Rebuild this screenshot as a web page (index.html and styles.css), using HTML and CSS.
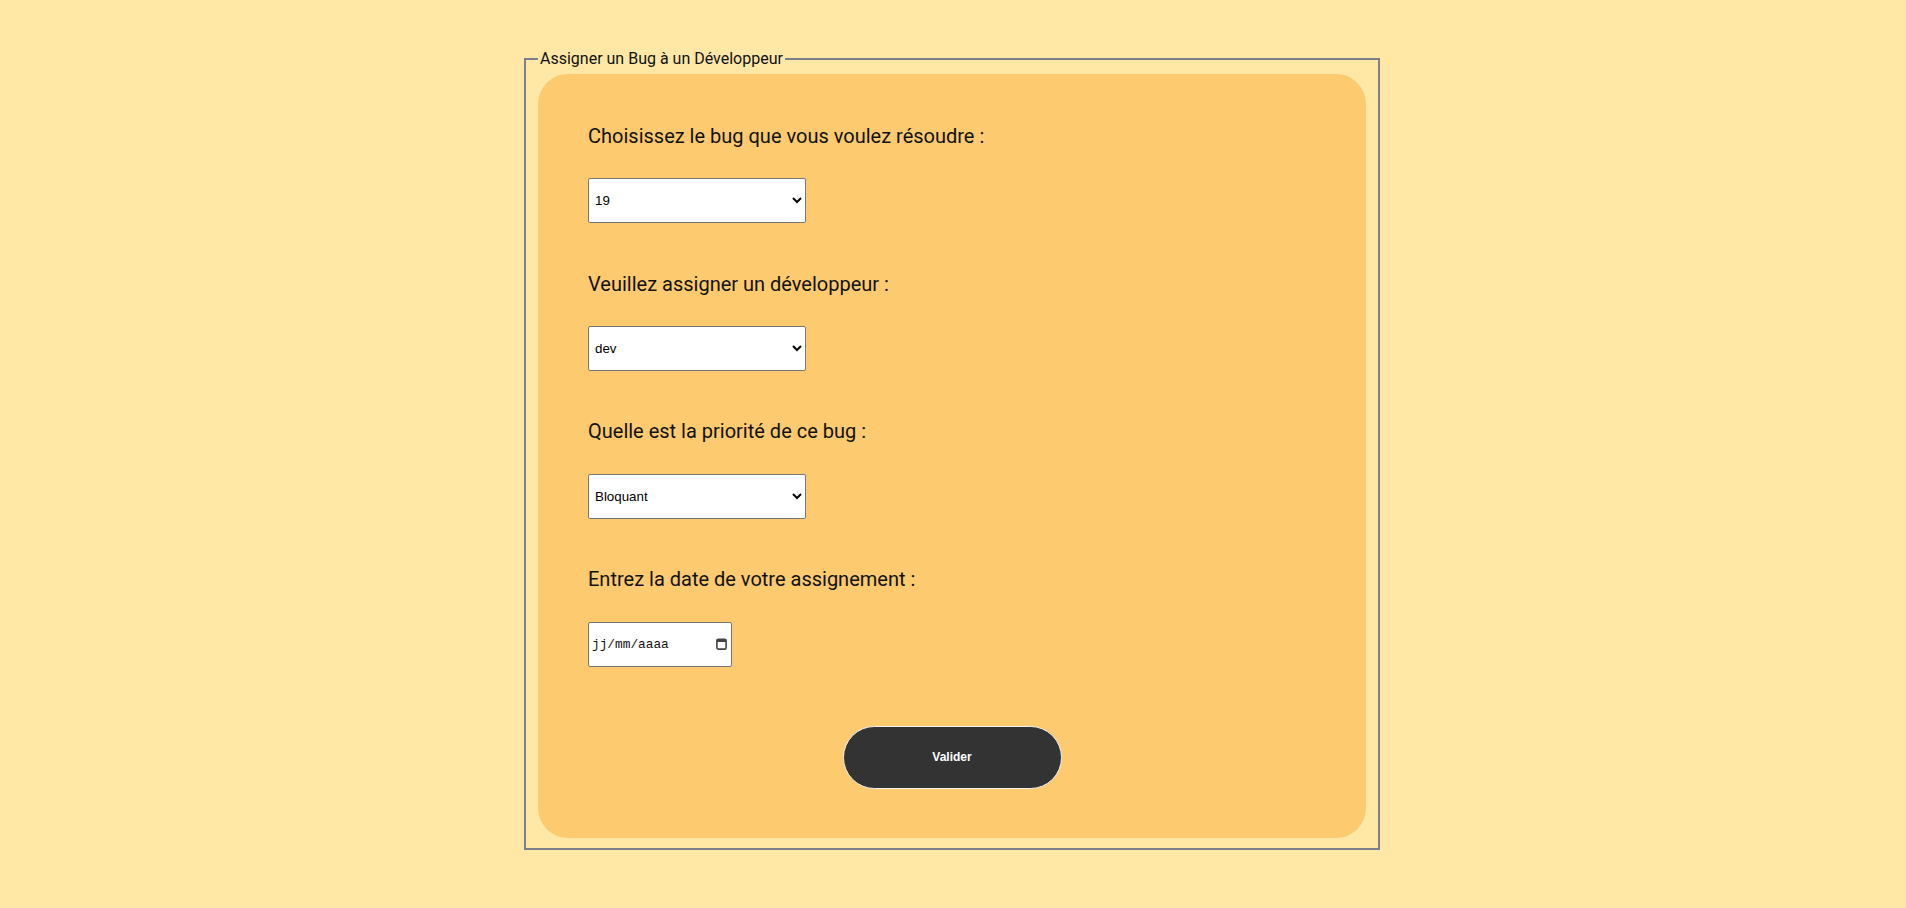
FILE: index.html
```html
<!DOCTYPE html>
<html lang="fr">
<head>
<meta charset="utf-8">
<title>Assigner un Bug</title>
<link rel="stylesheet" href="styles.css">
</head>
<body>
<main class="page">
  <form class="assign-form">
    <fieldset class="frame">
      <legend class="frame-legend">Assigner un Bug à un Développeur</legend>
      <div class="panel">
        <div class="group">
          <label class="label" for="bug">Choisissez le bug que vous voulez résoudre :</label>
          <select class="select" id="bug"><option>19</option></select>
        </div>
        <div class="group">
          <label class="label" for="dev">Veuillez assigner un développeur :</label>
          <select class="select" id="dev"><option>dev</option></select>
        </div>
        <div class="group">
          <label class="label" for="prio">Quelle est la priorité de ce bug :</label>
          <select class="select" id="prio"><option>Bloquant</option></select>
        </div>
        <div class="group group-last">
          <label class="label" for="date">Entrez la date de votre assignement :</label>
          <div class="date-input" id="date">
            <span class="date-text">jj/mm/aaaa</span>
            <svg class="cal-icon" width="11" height="12" viewBox="0 0 11 12" aria-hidden="true">
              <rect x="0.9" y="1.2" width="9.2" height="9.9" rx="1.4" fill="none" stroke="#444" stroke-width="1.6"/>
              <rect x="0.9" y="1.2" width="9.2" height="2.8" fill="#444"/>
            </svg>
          </div>
        </div>
        <div class="actions">
          <button type="button" class="submit">Valider</button>
        </div>
      </div>
    </fieldset>
  </form>
</main>
</body>
</html>
```
FILE: styles.css
```css
html, body {
  margin: 0;
  padding: 0;
  background: #ffe8a6;
  font-family: Roboto, "Liberation Sans", Arial, sans-serif;
  color: #111;
}

.page {
  padding-top: 49px;
  padding-right: 2px;
}

.assign-form {
  margin: 0;
}

.frame {
  width: 828px;
  margin: 0 auto;
  padding: 5.6px 12px 10px;
  border: 2px solid #7d7f8c;
  font-size: 16px;
}

.frame-legend {
  padding: 0 2px;
  font-size: 16px;
  color: #111;
}

.panel {
  background: #fdca70;
  border-radius: 30px;
  padding: 51px 50px 49px;
  display: flex;
  flex-direction: column;
}

.group {
  display: flex;
  flex-direction: column;
  align-items: flex-start;
  margin-bottom: 49.5px;
}

.group-last {
  margin-bottom: 59px;
}

.label {
  font-size: 20px;
  line-height: 23.44px;
  color: #111;
  margin-bottom: 30px;
}

.select {
  width: 218px;
  height: 45px;
  font-family: "Liberation Sans", Arial, sans-serif;
  font-size: 13.33px;
  color: #000;
  background: #fff;
  border: 1px solid #767676;
  border-radius: 2px;
  padding: 0 2px;
  margin: 0;
}

.date-input {
  box-sizing: border-box;
  width: 144px;
  height: 45px;
  background: #fff;
  border: 1px solid #767676;
  border-radius: 2px;
  display: flex;
  align-items: center;
  justify-content: space-between;
  padding: 0 4px 0 3px;
}

.date-text {
  font-family: "Liberation Mono", "DejaVu Sans Mono", monospace;
  font-size: 12.8px;
  color: #111;
}

.cal-icon {
  display: block;
}

.actions {
  display: flex;
  justify-content: center;
}

.submit {
  width: 219px;
  height: 63px;
  border-radius: 32px;
  background: #333333;
  border: 1px solid #f2f2f2;
  color: #fff;
  font-family: "Liberation Sans", Arial, sans-serif;
  font-weight: bold;
  font-size: 12px;
  cursor: pointer;
}
```
